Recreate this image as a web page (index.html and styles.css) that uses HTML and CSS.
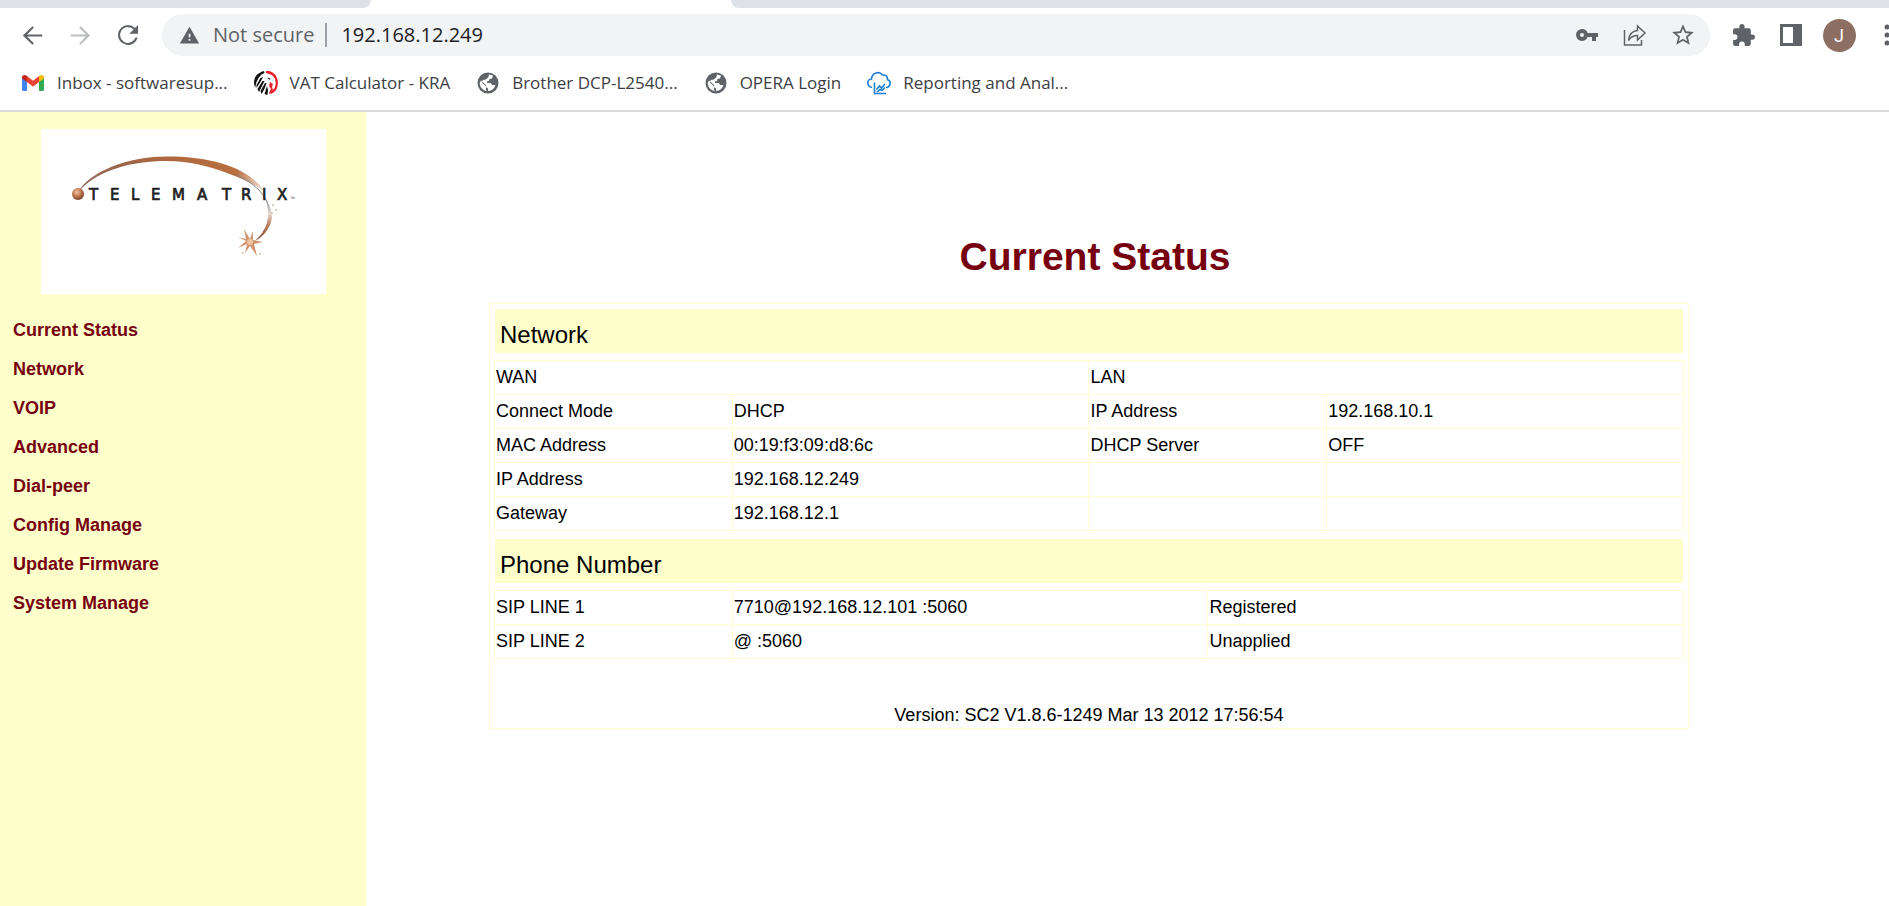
FILE: index.html
```html
<!DOCTYPE html>
<html lang="en">
<head>
<meta charset="utf-8">
<title>Current Status</title>
<link rel="stylesheet" href="styles.css">
</head>
<body>
<header class="browser">
  <div class="tabstrip"><span class="tab-left"></span><span class="tab-right"></span></div>
  <div class="toolbar">
    <button class="tool" aria-label="Back"><svg width="29" height="29" viewBox="0 0 24 24"><path d="M20 11.200H7.500l5.600-5.700L12 4.300l-8 7.700 8 7.700 1.100-1.200-5.600-5.700H20z"/></svg></button>
    <button class="tool tool-off" aria-label="Forward"><svg width="29" height="29" viewBox="0 0 24 24"><path d="M4 11.200h12.500l-5.600-5.700L12 4.300l8 7.700-8 7.700-1.100-1.200 5.600-5.700H4z"/></svg></button>
    <button class="tool" aria-label="Reload"><svg width="30" height="30" viewBox="0 0 24 24"><path d="M17.650 6.350A7.960 7.960 0 0 0 12 4a8 8 0 1 0 7.730 10h-1.800A6.300 6.300 0 1 1 12 5.700c1.740 0 3.300.710 4.440 1.860L13 11h7V4z"/></svg></button>
    <div class="omnibox">
      <svg class="warn" width="21" height="21" viewBox="0 0 24 24"><path d="M1 21h22L12 2zm12-3h-2v-2h2zm0-4h-2v-4h2z"/></svg>
      <span class="secure">Not secure</span>
      <input class="url" type="text" aria-label="Address" value="192.168.12.249">
      <button class="tool" aria-label="Passwords"><svg width="24" height="24" viewBox="0 0 24 24"><path d="M12.650 10A5.990 5.990 0 0 0 7 6a6 6 0 1 0 5.650 8H17v4h4v-4h2v-4zM7 14a2 2 0 1 1 0-4 2 2 0 0 1 0 4z"/></svg></button>
      <button class="tool" aria-label="Share"><svg width="24" height="24" viewBox="0 0 24 24"><path class="line" d="M1.500 7v15h17v-5M5.500 17.500c.6-6 3.500-9.500 9-10V3l7.500 7-7.500 7v-4.500c-4 0-6.800 1.500-9 5z"/></svg></button>
      <button class="tool" aria-label="Bookmark"><svg width="26" height="26" viewBox="0 0 24 24"><path d="m22 9.240-7.190-.620L12 2 9.190 8.630 2 9.240l5.460 4.730L5.820 21 12 17.270 18.180 21l-1.630-7.030zM12 15.400l-3.760 2.270 1-4.280-3.320-2.880 4.380-.380L12 6.100l1.710 4.040 4.380.380-3.320 2.880 1 4.280z"/></svg></button>
    </div>
    <button class="tool" aria-label="Extensions"><svg width="25" height="25" viewBox="0 0 24 24"><path d="M20.500 11H19V7a2 2 0 0 0-2-2h-4V3.500a2.500 2.500 0 0 0-5 0V5H4a2 2 0 0 0-2 2v3.800h1.500a2.700 2.700 0 0 1 0 5.400H2V20c0 1.100.900 2 2 2h3.800v-1.500a2.700 2.700 0 0 1 5.400 0V22H17a2 2 0 0 0 2-2v-4h1.500a2.500 2.500 0 0 0 0-5z"/></svg></button>
    <button class="tool" aria-label="Side panel"><svg width="22" height="22" viewBox="0 0 22 22"><path fill-rule="evenodd" d="M0 0h22v22H0zM3 3v16h10V3z"/></svg></button>
    <button class="tool" aria-label="Profile"><span class="avatar">J</span></button>
    <button class="tool" aria-label="Menu"><svg width="6" height="22" viewBox="0 0 6 22"><circle cx="3" cy="3" r="2.500"/><circle cx="3" cy="11" r="2.500"/><circle cx="3" cy="19" r="2.500"/></svg></button>
  </div>
  <nav class="bookmarks" aria-label="Bookmarks">
    <a href="#"><svg width="24" height="24" viewBox="0 0 24 24"><path fill="#4285f4" d="M1 6l5 3.500V20H2.500Q1 20 1 18.500z"/><path fill="#34a853" d="M23 6l-5 3.500V20h3.500q1.500 0 1.500-1.500z"/><path fill="#ea4335" d="M6 5l6 4.700L18 5v6l-6 4.700L6 11z"/><path fill="#c5221f" d="M1 6.500C1 4 3.600 3.200 6 5v6L1 7.500z"/><path fill="#fbbc04" d="M23 6.500C23 4 20.400 3.200 18 5v6l5-3.500z"/></svg>Inbox - softwaresup...</a>
    <a href="#"><svg width="24" height="24" viewBox="0 0 24 24"><path fill="none" stroke="#e8232e" stroke-width="2.200" d="M13 1.200C19 1.500 22.800 6 22.800 12c0 4-2 8-6 10"/><path fill="#e8232e" d="M12 0c5 0 8 2 10 5l-1 2c-2-3-5-4-9-5zM16 11l3 2-1 3 1 3-3 4-1-1 2-4-2-3z"/><path fill="#111" d="M10 0C3 2 0 6 0 12l1 5 1.500-6 2-4 3-3.500 3-1.500zM6.500 7l-4 7v3l4.500-7 2-4zM8.500 10l-5 8 1.500 3 3.500-7 2-4zM11 12l-4.500 8 1 3 3-5 2-6zM13 15l-2.500 8 3 1 .5-5zM13 6.500l3.500 1-1 1.200z"/></svg>VAT Calculator - KRA</a>
    <a href="#"><svg width="24" height="24" viewBox="0 0 24 24"><circle cx="12" cy="12" r="10.500" fill="#5f6368"/><path fill="#fff" d="M13 3.500l4 1-1 3-2.500.5-.5 2-2 .5v1.500h4l1 2h3.500c-1 3.500-3.500 5.700-7.500 6v-2.500l-2-1.500v-2L5 9.500 3.700 12c0 4 3 7.500 7 8l-1-2 1-2-2-2-2.500-2 .5-3 3-.5 2.500-2z"/></svg>Brother DCP-L2540...</a>
    <a href="#"><svg width="24" height="24" viewBox="0 0 24 24"><circle cx="12" cy="12" r="10.500" fill="#5f6368"/><path fill="#fff" d="M13 3.500l4 1-1 3-2.500.5-.5 2-2 .5v1.500h4l1 2h3.500c-1 3.500-3.500 5.700-7.500 6v-2.500l-2-1.500v-2L5 9.500 3.700 12c0 4 3 7.500 7 8l-1-2 1-2-2-2-2.500-2 .5-3 3-.5 2.500-2z"/></svg>OPERA Login</a>
    <a href="#"><svg width="24" height="24" viewBox="0 0 24 24"><g fill="none" stroke="#1f7fd6" stroke-width="1.600"><path d="M5 16.500C-.5 15.500-.5 8.500 4.500 8 5 2 12-.5 15.500 4c4-.5 5 2 5 4.500 4 1.500 3.500 7.500-1.500 8"/><path d="M7.500 11.500v11H19M9.500 18.500l3-3.500 2 2 3.500-4M10 21l3-2.500 2 1 3-3"/></g></svg>Reporting and Anal...</a>
  </nav>
</header>
<div class="page">
  <aside class="sidebar">
    <svg class="logo" width="285" height="165" viewBox="0 0 285 165" role="img" aria-label="Telematrix">
      <defs>
        <linearGradient id="trail" x1="0" x2="1" y1="0" y2="0"><stop offset="0" stop-color="#8d6454"/><stop offset=".5" stop-color="#b0683f"/><stop offset=".85" stop-color="#b9703f"/><stop offset="1" stop-color="#efe2d9"/></linearGradient>
        <linearGradient id="tail" x1="0" x2="0" y1="0" y2="1"><stop offset="0" stop-color="#999"/><stop offset=".35" stop-color="#e4dad3"/><stop offset=".6" stop-color="#c08260"/><stop offset="1" stop-color="#7d4a38"/></linearGradient>
        <radialGradient id="ball" cx=".4" cy=".35" r=".7"><stop offset="0" stop-color="#f3c7a4"/><stop offset=".5" stop-color="#c27a50"/><stop offset="1" stop-color="#6e3a25"/></radialGradient>
      </defs>
      <rect width="285" height="165" fill="#fff"/>
      <path fill="url(#trail)" d="M39 60C54 40 90 27.500 126 27.500c38 0 68 8 86 22.500 5 4 9 8 11 12-9-6-20-12-37-18-18-7-38-12-60-12-36 0-67 9-86 28z"/>
      <path fill="none" stroke="#86807c" d="M196 46c16 8 26 17 30 27 4 13 1 23-4 30"/>
      <path fill="url(#tail)" d="M225 70c4 6 6 13 6 19-2 11-9 19-17 23 8-8 13-15 13-25 0-7-1-13-2-17z"/>
      <circle cx="37" cy="65" r="6" fill="url(#ball)"/>
      <g fill="#cf9573"><path d="M203 100l6 10 3-8 0 9 10 2-9 2 3 12-7-10-5 7 2-9-9 4 8-7-8-4 8 2z"/></g>
      <circle cx="209" cy="113" r="3" fill="#f2c4a0"/>
      <g fill="#d9bba9"><circle cx="232" cy="76" r="1"/><circle cx="235" cy="81" r="1"/><circle cx="231" cy="84" r="1"/><circle cx="219" cy="125" r="1"/><circle cx="202" cy="124" r="1"/></g>
      <text class="wordmark" x="48 69 90 110 131 156 181 200 221 236" y="71">TELEMATRIX</text>
      <text class="mark" x="249" y="71">™</text>
    </svg>
    <nav class="menu" aria-label="Main">
      <a href="#">Current Status</a>
      <a href="#">Network</a>
      <a href="#">VOIP</a>
      <a href="#">Advanced</a>
      <a href="#">Dial-peer</a>
      <a href="#">Config Manage</a>
      <a href="#">Update Firmware</a>
      <a href="#">System Manage</a>
    </nav>
  </aside>
  <main class="content">
    <h1>Current Status</h1>
    <div class="panel">
      <h2>Network</h2>
      <table>
        <colgroup><col class="narrow"><col class="medium"><col class="narrow"><col class="medium"></colgroup>
        <tr><td colspan="2">WAN</td><td colspan="2">LAN</td></tr>
        <tr><td>Connect Mode</td><td>DHCP</td><td>IP Address</td><td>192.168.10.1</td></tr>
        <tr><td>MAC Address</td><td>00:19:f3:09:d8:6c</td><td>DHCP Server</td><td>OFF</td></tr>
        <tr><td>IP Address</td><td>192.168.12.249</td><td></td><td></td></tr>
        <tr><td>Gateway</td><td>192.168.12.1</td><td></td><td></td></tr>
      </table>
      <h2>Phone Number</h2>
      <table>
        <colgroup><col class="narrow"><col class="wide"><col class="wide"></colgroup>
        <tr><td>SIP LINE 1</td><td>7710@192.168.12.101 :5060</td><td>Registered</td></tr>
        <tr><td>SIP LINE 2</td><td>@ :5060</td><td>Unapplied</td></tr>
      </table>
      <p class="version">Version: SC2 V1.8.6-1249 Mar 13 2012 17:56:54</p>
    </div>
  </main>
</div>
</body>
</html>
```
FILE: styles.css
```css
* { box-sizing: border-box; }
body {
  margin: 0;
  min-height: 100vh;
  display: flex;
  flex-direction: column;
  overflow-x: hidden;
  background: #fff;
  color: #000;
  font: 18px/22px "Liberation Sans", Arial, sans-serif;
}
a { text-decoration: none; }

.browser {
  overflow: hidden;
  border-bottom: 2px solid #dadbdd;
  font-family: "Open Sans", "Noto Sans", sans-serif;
}
.tabstrip { display: flex; gap: 360px; height: 8px; }
.tab-left { width: 371px; background: #dee1e6; border-bottom-right-radius: 8px; }
.tab-right { flex: 1; background: #dee1e6; border-bottom-left-radius: 8px; }
.toolbar {
  display: flex;
  align-items: center;
  height: 54px;
  margin-right: -22px;
  padding-left: 8px;
}
.tool {
  flex: none;
  display: flex;
  align-items: center;
  justify-content: center;
  width: 48px;
  height: 42px;
  padding: 0;
  border: 0;
  background: none;
  fill: #5f6368;
}
.tool-off { fill: #bcbdc0; }
.line { fill: none; stroke: #5f6368; stroke-width: 1.5; }
.omnibox {
  flex: 1;
  display: flex;
  align-items: center;
  height: 42px;
  margin: 0 9px 0 10px;
  padding: 0 3px 0 17px;
  border-radius: 21px;
  background: #f1f3f4;
}
.warn { fill: #5f6368; }
.secure {
  margin-left: 13px;
  padding-right: 11px;
  border-right: 2px solid #9aa0a6;
  color: #5f6368;
  font-size: 20px;
  line-height: 24px;
}
.url {
  flex: 1;
  min-width: 0;
  padding: 0 0 0 14px;
  border: 0;
  outline: 0;
  background: none;
  color: #202124;
  font: inherit;
  font-size: 20px;
}
.avatar {
  width: 33px;
  height: 33px;
  border-radius: 50%;
  background: #8d6e63;
  color: #fff;
  font: 18px/33px Roboto, sans-serif;
}
.bookmarks {
  display: flex;
  gap: 26px;
  align-items: center;
  height: 48px;
  padding: 0 21px 6px;
}
.bookmarks a {
  display: flex;
  gap: 12px;
  align-items: center;
  color: #3c4043;
  font-size: 17px;
  white-space: nowrap;
}

.page { flex: 1; display: flex; }
.sidebar { flex: none; width: 366px; padding-top: 17px; background: #ffffcc; }
.logo { display: block; margin: 0 auto; }
.wordmark { font: 15px "DejaVu Sans", sans-serif; fill: #222; stroke: #222; stroke-width: 0.7; }
.mark { font-size: 5px; fill: #444; }
.menu { display: flex; flex-direction: column; margin-top: 17px; }
.menu a {
  padding-left: 13px;
  color: #76000f;
  font-weight: bold;
  line-height: 39px;
}
.content { flex: 1; padding: 122px 200px 0 123px; }
h1 {
  margin: 0 0 24px;
  padding-left: 12px;
  color: #76000f;
  font-size: 39px;
  line-height: 45px;
  text-align: center;
}
.panel { padding: 5px; border: 1px solid #ffffd2; }
h2 {
  margin: 0 0 7px;
  padding: 8px 5px 0;
  background: #ffffcc;
  font-size: 24px;
  font-weight: normal;
  line-height: 36px;
}
table {
  width: calc(100% + 2px);
  margin: 0 -1px 8px;
  border-collapse: collapse;
  table-layout: fixed;
}
td { height: 34px; padding: 0 1px 2px; border: 1px solid #ffffd2; }
.narrow { width: 20%; }
.medium { width: 30%; }
.wide { width: 40%; }
.version { margin: 45px 0 -3px; text-align: center; }
```
